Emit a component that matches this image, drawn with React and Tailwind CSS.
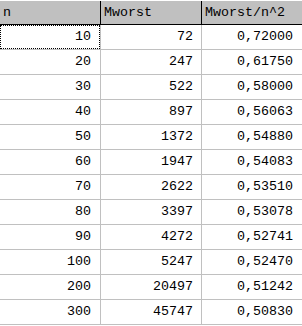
import React from 'react';

const rows = [
  [10, 72, '0,72000'],
  [20, 247, '0,61750'],
  [30, 522, '0,58000'],
  [40, 897, '0,56063'],
  [50, 1372, '0,54880'],
  [60, 1947, '0,54083'],
  [70, 2622, '0,53510'],
  [80, 3397, '0,53078'],
  [90, 4272, '0,52741'],
  [100, 5247, '0,52470'],
  [200, 20497, '0,51242'],
  [300, 45747, '0,50830'],
];

export default function App() {
  return (
    <div className="w-[302px] h-[326px] bg-white overflow-hidden font-['Liberation_Mono',monospace] text-[13.33px] text-black leading-none">
      {/* Header */}
      <div className="grid grid-cols-[101px_101px_100px] border-t border-white">
        <div className="h-[24px] bg-[#c0c0c0] border-b border-r border-black flex items-center pl-[3px]">n</div>
        <div className="h-[24px] bg-[#c0c0c0] border-b border-r border-black flex items-center pl-[3px]">Mworst</div>
        <div className="h-[24px] bg-[#c0c0c0] border-b border-black flex items-center pl-[3px]">Mworst/n^2</div>
      </div>

      {/* Body */}
      {rows.map((r, i) => (
        <div key={i} className="grid grid-cols-[101px_101px_100px]">
          <div className="h-[25px] border-b border-r border-[#c0c0c0]">
            <div
              className={
                'h-full flex items-center justify-end pr-[8px] border ' +
                (i === 0 ? 'border-dotted border-black' : 'border-transparent')
              }
            >
              {r[0]}
            </div>
          </div>
          <div className="h-[25px] border-b border-r border-[#c0c0c0] flex items-center justify-end pr-[8px]">
            {r[1]}
          </div>
          <div className="h-[25px] border-b border-[#c0c0c0] flex items-center justify-end pr-[9px]">
            {r[2]}
          </div>
        </div>
      ))}
    </div>
  );
}
